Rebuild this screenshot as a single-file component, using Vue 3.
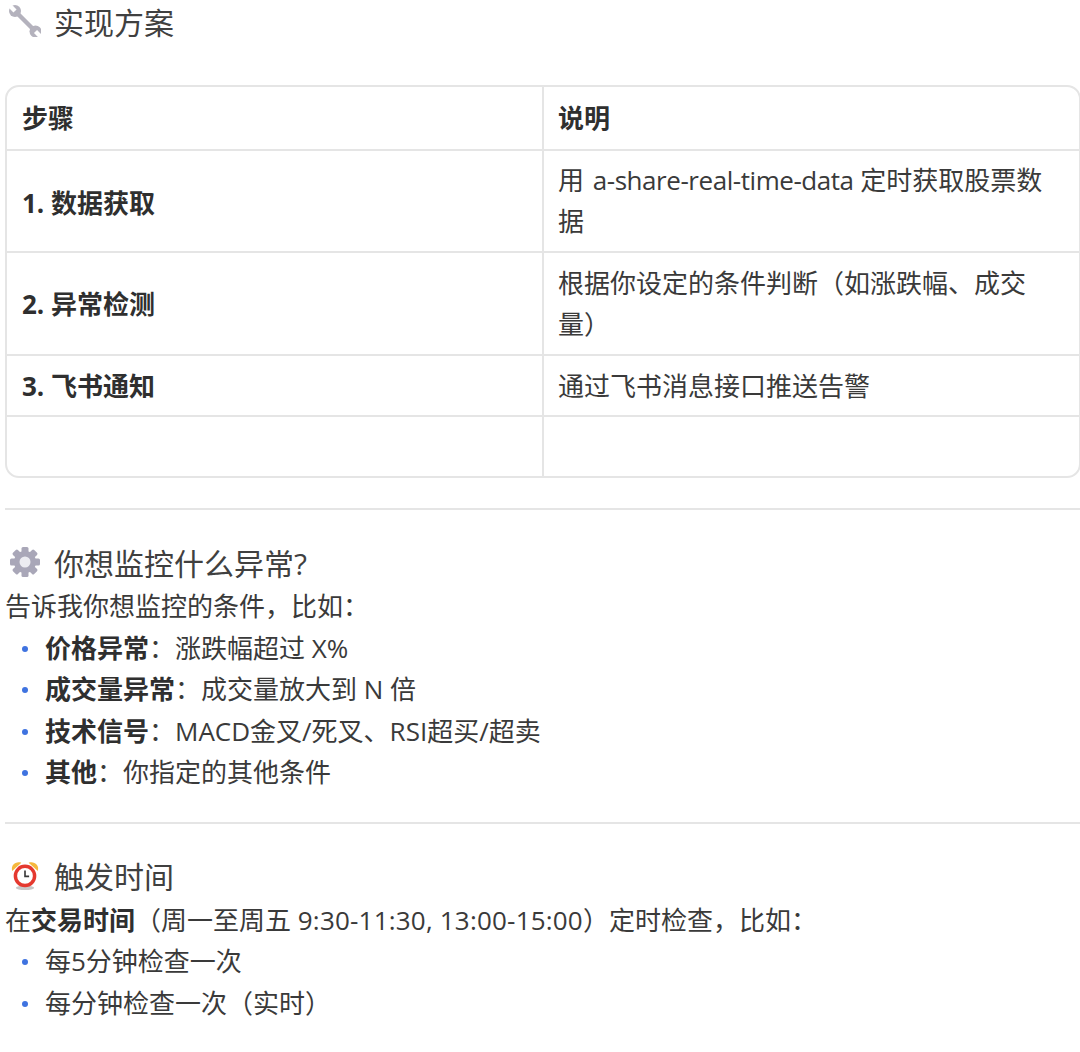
<script setup>
const rows = [
  { step: '1. 数据获取', desc: '用 ', code: 'a-share-real-time-data', rest: ' 定时获取股票数据' },
  { step: '2. 异常检测', desc: '根据你设定的条件判断（如涨跌幅、成交量）' },
  { step: '3. 飞书通知', desc: '通过飞书消息接口推送告警' },
  { step: '', desc: '' },
]
const monitors = [
  { label: '价格异常', text: '涨跌幅超过 X%' },
  { label: '成交量异常', text: '成交量放大到 N 倍' },
  { label: '技术信号', text: 'MACD金叉/死叉、RSI超买/超卖' },
  { label: '其他', text: '你指定的其他条件' },
]
const times = ['每5分钟检查一次', '每分钟检查一次（实时）']
</script>

<template>
  <main class="page">
    <h3 class="title first">
      <svg class="icon" viewBox="0 0 32 32">
        <g fill="#b4b2bd">
          <path d="M6.5 6.5 L26 26" stroke="#b4b2bd" stroke-width="4.4" />
          <circle cx="6" cy="6" r="6" />
          <circle cx="26.5" cy="26.5" r="6" />
        </g>
        <rect x="3.8" y="-6" width="4.4" height="12" fill="#fff" transform="rotate(-45 6 6)" />
        <rect x="24.3" y="26.5" width="4.4" height="12" fill="#fff" transform="rotate(-45 26.5 26.5)" />
      </svg>
      实现方案
    </h3>

    <div class="table-wrap">
      <table>
        <thead>
          <tr><th>步骤</th><th>说明</th></tr>
        </thead>
        <tbody>
          <tr v-for="(r, i) in rows" :key="i">
            <td><strong>{{ r.step }}</strong></td>
            <td>{{ r.desc }}<span v-if="r.code" class="code">{{ r.code }}</span>{{ r.rest }}</td>
          </tr>
        </tbody>
      </table>
    </div>

    <hr />

    <h3 class="title">
      <svg class="icon" viewBox="0 0 32 32">
        <g fill="#a9a7b8">
          <circle cx="16" cy="16" r="11" />
          <rect v-for="a in [0,45,90,135,180,225,270,315]" :key="a" x="12.5" y="1" width="7" height="7" rx="1.5" :transform="`rotate(${a} 16 16)`" />
        </g>
        <circle cx="16" cy="16" r="5.5" fill="#ececf1" />
      </svg>
      你想监控什么异常?
    </h3>
    <p>告诉我你想监控的条件，比如：</p>
    <ul>
      <li v-for="m in monitors" :key="m.label"><strong>{{ m.label }}</strong>：{{ m.text }}</li>
    </ul>

    <hr />

    <h3 class="title">
      <svg class="icon" viewBox="-1.5 -1.5 35 35">
        <ellipse cx="16" cy="30" rx="10" ry="2.5" fill="#c9c7c7" />
        <path d="M2 11.5 C0 5 6 0.5 12 2.5 Z" fill="#f5b83d" />
        <path d="M30 11.5 C32 5 26 0.5 20 2.5 Z" fill="#f5b83d" />
        <circle cx="16" cy="17" r="10.5" fill="#fff" stroke="#e5392f" stroke-width="3.8" />
        <path d="M16 11 V17.5 H20.5" fill="none" stroke="#3a3a3a" stroke-width="1.8" />
      </svg>
      触发时间
    </h3>
    <p>在<strong>交易时间</strong>（周一至周五 <span class="clock">9:30-11:30, 13:00-15:00</span>）定时检查，比如：</p>
    <ul>
      <li v-for="t in times" :key="t">{{ t }}</li>
    </ul>
  </main>
</template>

<style>
html, body { margin: 0; background: #fff; overflow: hidden; }
</style>

<style scoped>
.page {
  width: 1080px;
  height: 1052px;
  overflow: hidden;
  box-sizing: border-box;
  padding-left: 5px;
  font-family: "Open Sans", "Noto Sans CJK SC", sans-serif;
  font-size: 26px;
  color: #3a3a3a;
  background: #fff;
}
.title {
  display: flex;
  align-items: center;
  margin: 0;
  height: 49px;
  font-size: 30px;
  font-weight: 400;
  color: #404040;
}
.title.first { height: 44px; margin-top: -1px; }
.icon {
  width: 32px;
  height: 32px;
  margin-left: 4px;
  margin-right: 13px;
  flex: none;
}
.table-wrap {
  width: 1076px;
  margin-top: 42px;
  box-sizing: border-box;
  border: 2px solid #e5e5e5;
  border-radius: 14px;
  overflow: hidden;
}
table {
  width: 100%;
  border-collapse: collapse;
  table-layout: fixed;
}
th, td {
  padding: 9px 15px;
  text-align: left;
  vertical-align: middle;
  line-height: 41px;
  border-bottom: 2px solid #e5e5e5;
  border-right: 2px solid #e5e5e5;
}
th { font-weight: 700; color: #2f2f2f; padding-top: 11px; padding-bottom: 10px; }
th:last-child, td:last-child { border-right: 0; padding-left: 14px; }
tbody tr:nth-child(1) td:first-child { padding-top: 13px; }
tbody tr:nth-child(2) td { padding-top: 10px; }
tbody tr:nth-child(3) td { padding-top: 10px; padding-bottom: 8px; }
tbody tr:last-child td { border-bottom: 0; height: 41px; }
strong { font-weight: 700; color: #2f2f2f; }
hr {
  border: 0;
  height: 2px;
  background: #e5e5e5;
  margin: 30px 0 27px;
}
ul + hr { margin-top: 28px; }
p { margin: 0; line-height: 41.5px; }
.code { letter-spacing: -0.45px; margin-left: 2px; }
.clock { letter-spacing: 0.2px; }
ul {
  list-style: none;
  margin: 0;
  padding: 0 0 0 40px;
  line-height: 41.5px;
}
li { position: relative; }
li::before {
  content: "";
  position: absolute;
  left: -23px;
  top: 18px;
  width: 6px;
  height: 6px;
  border-radius: 50%;
  background: #3f73e0;
}
</style>
